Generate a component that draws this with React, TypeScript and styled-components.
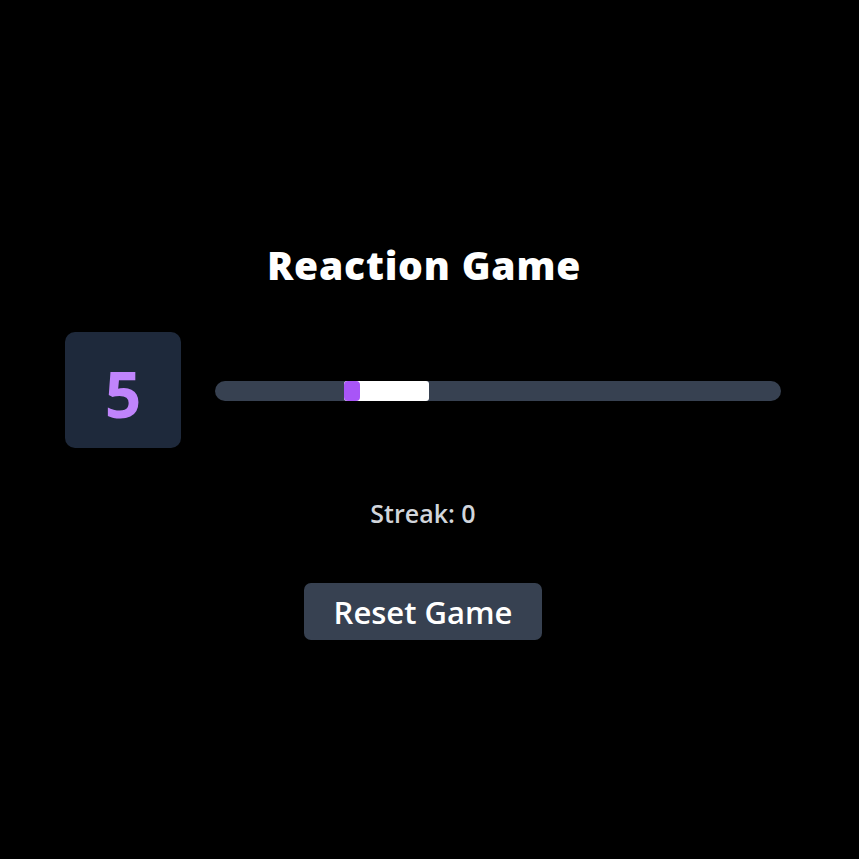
import React, { useState } from 'react'
import styled, { createGlobalStyle } from 'styled-components'

const GlobalStyle = createGlobalStyle`
  html, body {
    margin: 0;
    padding: 0;
    background: #000000;
  }
  body {
    font-family: "Open Sans", "Noto Sans", "Liberation Sans", sans-serif;
    color: #ffffff;
  }
`

const Page = styled.div`
  min-height: 859px;
  padding: 240px 78px 0 65px;
  box-sizing: border-box;
`

const Title = styled.h1`
  margin: 0;
  text-align: center;
  font-size: 39px;
  font-weight: 800;
  line-height: 50px;
  letter-spacing: 0.8px;
  padding-left: 2px;
`

const PlayRow = styled.div`
  display: flex;
  align-items: center;
  gap: 34px;
  margin-top: 42px;
`

const ScoreBox = styled.div`
  width: 116px;
  height: 116px;
  flex-shrink: 0;
  box-sizing: border-box;
  padding-top: 8px;
  border-radius: 10px;
  background: #1e293b;
  display: flex;
  align-items: center;
  justify-content: center;
  color: #c084fc;
  font-size: 64px;
  font-weight: 700;
  line-height: 1;
`

const Track = styled.div`
  position: relative;
  flex: 1;
  height: 20px;
  margin-top: 2px;
  border-radius: 10px;
  background: #374151;
`

const Zone = styled.div`
  position: absolute;
  top: 0;
  bottom: 0;
  background: #ffffff;
  border-radius: 3px;
`

const Marker = styled.div`
  position: absolute;
  top: 0;
  bottom: 0;
  width: 16px;
  background: #a855f7;
  border-radius: 4px;
`

const Streak = styled.div`
  margin-top: 50px;
  text-align: center;
  font-size: 25px;
  font-weight: 600;
  color: #d1d5db;
  line-height: 30px;
`

const ButtonRow = styled.div`
  display: flex;
  justify-content: center;
  margin-top: 55px;
`

const ResetButton = styled.button`
  width: 238px;
  height: 57px;
  border: none;
  border-radius: 7px;
  background: #374151;
  color: #ffffff;
  font-family: inherit;
  font-size: 31px;
  font-weight: 600;
  cursor: pointer;
  &:hover {
    opacity: 0.85;
  }
`

const App = () => {
  const [streak, setStreak] = useState(0)
  const [value] = useState(5)

  return (
    <>
      <GlobalStyle />
      <Page>
        <Title>Reaction Game</Title>
        <PlayRow>
          <ScoreBox>{value}</ScoreBox>
          <Track>
            <Zone style={{ left: '22.8%', width: '15%' }} />
            <Marker style={{ left: '22.8%' }} />
          </Track>
        </PlayRow>
        <Streak>Streak: {streak}</Streak>
        <ButtonRow>
          <ResetButton onClick={() => setStreak(0)}>Reset Game</ResetButton>
        </ButtonRow>
      </Page>
    </>
  )
}

export default App
